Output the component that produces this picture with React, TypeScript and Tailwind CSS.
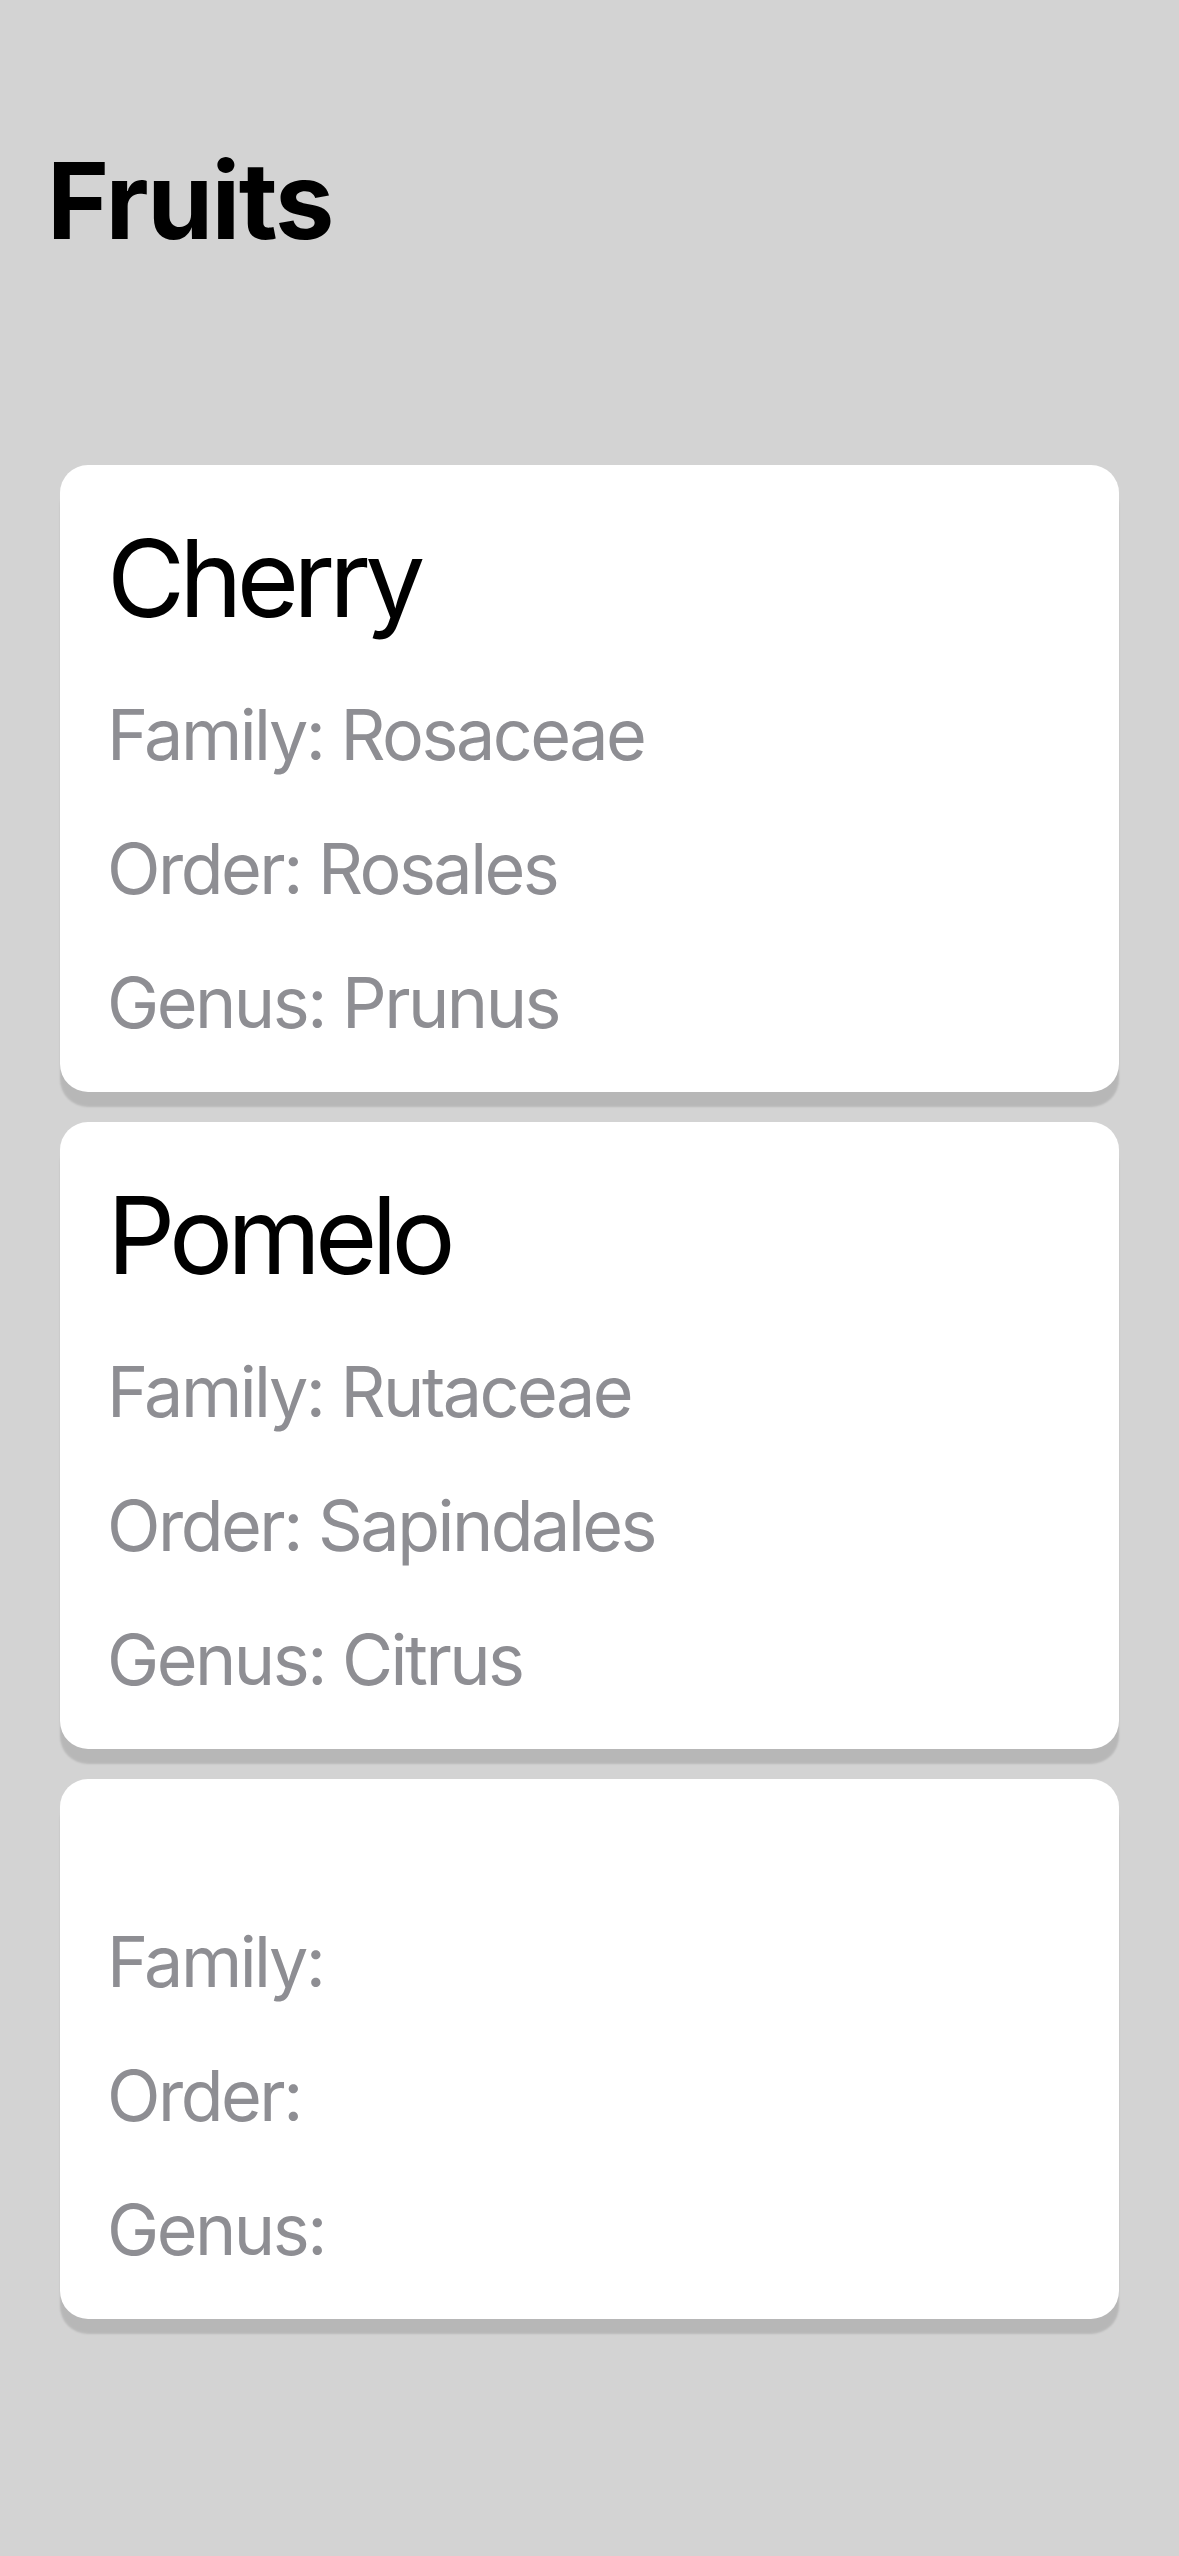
import React from 'react';

interface Fruit {
  name: string;
  family: string;
  order: string;
  genus: string;
}

const FRUITS: Fruit[] = [
  { name: 'Cherry', family: 'Rosaceae', order: 'Rosales', genus: 'Prunus' },
  { name: 'Pomelo', family: 'Rutaceae', order: 'Sapindales', genus: 'Citrus' },
  { name: '', family: '', order: '', genus: '' },
];

function FruitCard({ fruit }: { fruit: Fruit }) {
  return (
    <div className="bg-white rounded-[28px] pl-[47px] pr-[40px] pt-[49px] pb-[22px] shadow-[0_15px_2px_rgba(0,0,0,0.13)]">
      {fruit.name ? (
        <div className="text-[107px] leading-[128px] text-black tracking-[-0.055em] mb-[26px]">
          {fruit.name}
        </div>
      ) : (
        // empty name still takes a bit of room
        <div className="h-[67px]" />
      )}
      <div className="flex flex-col text-[70px] leading-[134px] text-[#8e8e93] tracking-[-0.036em]">
        <div>Family: {fruit.family}</div>
        <div>Order: {fruit.order}</div>
        <div>Genus: {fruit.genus}</div>
      </div>
    </div>
  );
}

export default function App() {
  return (
    <div
      className="min-h-[2556px] w-full bg-[#d3d3d3] pt-[137px]"
      style={{ fontFamily: 'Inter, "Noto Sans", sans-serif' }}
    >
      <h1 className="pl-[47px] text-[106px] leading-[128px] font-bold text-black tracking-[-0.015em]">
        Fruits
      </h1>
      <div className="mt-[200px] px-[60px] flex flex-col gap-[30px]">
        {FRUITS.map((fruit, i) => (
          <FruitCard key={i} fruit={fruit} />
        ))}
      </div>
    </div>
  );
}
